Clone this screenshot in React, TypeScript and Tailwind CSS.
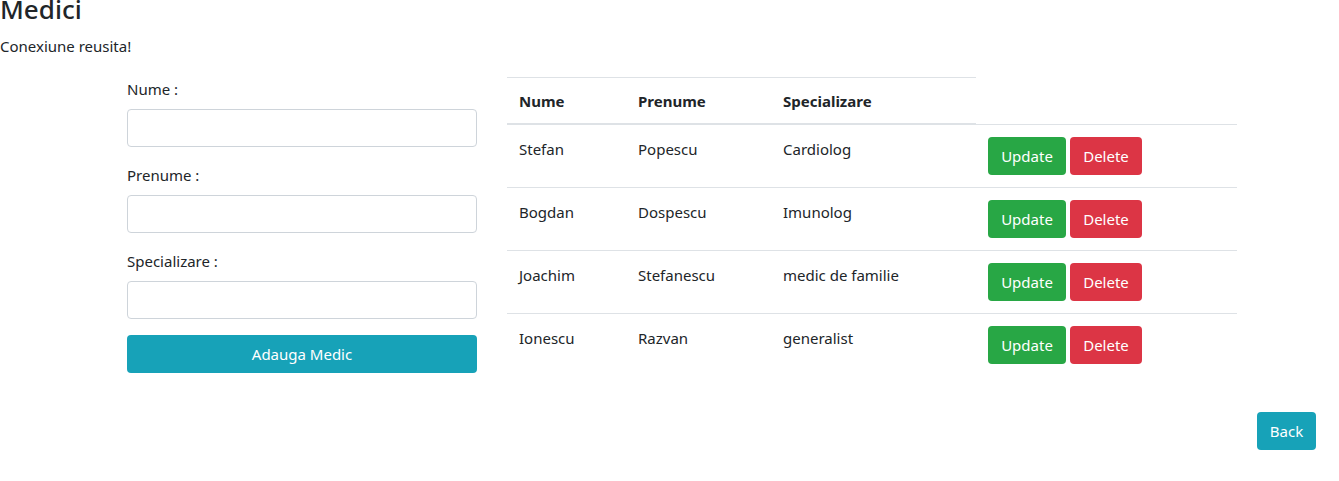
import React from 'react'

const medici = [
  { nume: 'Stefan', prenume: 'Popescu', specializare: 'Cardiolog' },
  { nume: 'Bogdan', prenume: 'Dospescu', specializare: 'Imunolog' },
  { nume: 'Joachim', prenume: 'Stefanescu', specializare: 'medic de familie' },
  { nume: 'Ionescu', prenume: 'Razvan', specializare: 'generalist' },
]

export default function App() {
  return (
    <div className="min-h-screen bg-white text-[15px] leading-[24px] text-[#212529] font-['Noto_Sans','Open_Sans',sans-serif]">
      <h3 className="mt-[-6px] mb-[9px] text-[26px] font-medium leading-[1.2]">Medici</h3>
      <p>Conexiune reusita!</p>

      <div className="mt-[19px] flex items-start pl-[127px]">
        {/* formular */}
        <form className="w-[350px]">
          <div className="mb-4">
            <label className="mb-2 block">Nume :</label>
            <input
              type="text"
              className="block h-[38px] w-full rounded border border-[#ced4da] px-3"
            />
          </div>
          <div className="mb-4">
            <label className="mb-2 block">Prenume :</label>
            <input
              type="text"
              className="block h-[38px] w-full rounded border border-[#ced4da] px-3"
            />
          </div>
          <div className="mb-4">
            <label className="mb-2 block">Specializare :</label>
            <input
              type="text"
              className="block h-[38px] w-full rounded border border-[#ced4da] px-3"
            />
          </div>
          <button
            type="button"
            className="block h-[38px] w-full rounded bg-[#17a2b8] text-white"
          >
            Adauga Medic
          </button>
        </form>

        {/* tabel */}
        <table className="ml-[30px] w-[730px] border-collapse">
          <thead>
            <tr>
              <th className="w-[119px] border-t border-b-2 border-[#dee2e6] px-3 pt-[11px] pb-[10px] text-left align-bottom font-bold">Nume</th>
              <th className="w-[145px] border-t border-b-2 border-[#dee2e6] px-3 pt-[11px] pb-[10px] text-left align-bottom font-bold">Prenume</th>
              <th className="w-[205px] border-t border-b-2 border-[#dee2e6] px-3 pt-[11px] pb-[10px] text-left align-bottom font-bold">Specializare</th>
            </tr>
          </thead>
          <tbody>
            {medici.map((m) => (
              <tr key={m.nume}>
                <td className="border-t border-[#dee2e6] p-3 align-top">{m.nume}</td>
                <td className="border-t border-[#dee2e6] p-3 align-top">{m.prenume}</td>
                <td className="border-t border-[#dee2e6] p-3 align-top">{m.specializare}</td>
                <td className="border-t border-[#dee2e6] p-3 align-top">
                  <div className="flex gap-1">
                    <button className="h-[38px] w-[78px] rounded bg-[#28a745] text-white">Update</button>
                    <button className="h-[38px] w-[72px] rounded bg-[#dc3545] text-white">Delete</button>
                  </div>
                </td>
              </tr>
            ))}
          </tbody>
        </table>
      </div>

      <div className="mt-9 flex justify-end pr-[23px]">
        <button className="h-[38px] w-[59px] rounded bg-[#17a2b8] text-white">Back</button>
      </div>
    </div>
  )
}
